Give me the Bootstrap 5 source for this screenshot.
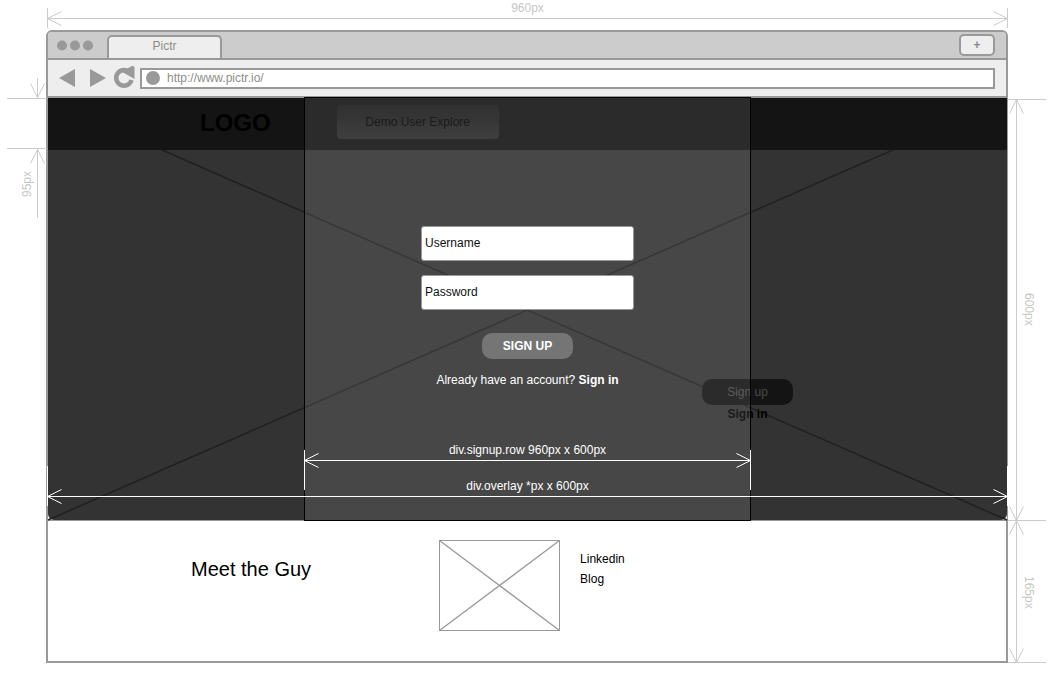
<!DOCTYPE html>
<html lang="en">
<head>
<meta charset="utf-8">
<meta name="viewport" content="width=device-width, initial-scale=1">
<title>Pictr wireframe</title>
<link href="https://cdn.jsdelivr.net/npm/bootstrap@5.3.0/dist/css/bootstrap.min.css" rel="stylesheet">
<style>
  body { font: 12px/18px "Liberation Sans", Arial, sans-serif; color: #000; background: #fff; }
  a { color: inherit; text-decoration: none; }
  input, button { font: inherit; }
  svg { display: block; overflow: visible; }

  /* Sheet: gutter for dimensions | browser | gutter for dimensions */
  .sheet { display: grid; grid-template-columns: 46px minmax(0, 1fr) 44px; }
  .west { grid-column: 1; }
  .mid { grid-column: 2; }
  .east { grid-column: 3; }
  .dim { stroke: #ccc; fill: none; }
  .dim-label { color: #c4c8c2; }
  .vert { writing-mode: vertical-rl; }
  .flip { transform: rotate(180deg); }
  .top-dim { height: 30px; margin-left: 1px; }
  .top-dim .dim-label { top: -1px; }
  .top-dim svg { top: 8px; }
  .bar-height { padding: 73px 0 0 18px; }

  /* Browser chrome */
  .chrome { border: 2px solid #999; border-radius: 6px 6px 0 0; background: #eee; overflow: hidden; }
  .tabs { height: 28px; background: #ccc; border-bottom: 2px solid #999; padding: 0 11px 0 9px; }
  .tab { width: 115px; height: 23px; border: 2px solid #999; border-bottom: 0; border-radius: 5px 5px 0 0; background: #eee; color: #8c8f88; line-height: 18px; margin-left: 13px; }
  .new-tab { width: 36px; height: 22px; border: 2px solid #999; border-radius: 5px; background: #eee; color: #888; padding: 0; line-height: 16px; }
  .tools { height: 36px; padding: 0 11px 0 10px; }
  .address { height: 21px; border: 2px solid #999; background: #fff; padding-left: 4px; }
  .address input { border: 0; outline: 0; color: #8c8f88; background: none; padding: 0; line-height: 16px; }

  /* Hero with stacked layers */
  .hero { border-left: 2px solid #999; border-right: 1px solid #999; border-bottom: 1px solid #999; }
  .stage { display: grid; background: #333; border-radius: 0 0 6px 6px; }
  .stage > * { grid-area: 1 / 1; }
  .cross { padding-top: 2px; }
  .cross svg { width: 100%; height: 100%; stroke: #202020; stroke-width: 1.5; }
  .topbar { height: 52px; background: #141414; padding-left: 152px; gap: 66px; }
  .brand { font-size: 24px; line-height: 28px; font-weight: 700; padding-bottom: 2px; }
  .demo { width: 162px; height: 34px; border: 0; border-radius: 4px; background: linear-gradient(#191919, #2a2a2a); color: #000; margin-top: -4px; }
  .pill { width: 91px; height: 26px; border: 0; border-radius: 10px; padding: 0; }
  .ghost { padding: 229px 214px 0 0; }
  .ghost .pill { background: #141414; color: #4a4a4a; }
  .panel { width: 447px; max-width: 100%; margin: -1px auto; border: 1px solid #000; background: rgba(255, 255, 255, .1); padding: 128px 0 131px; color: #fff; }
  .field { width: 213px; height: 35px; border: 1px solid #999; border-radius: 3px; background: #fff; padding: 0 3px 1px; color: #000; outline: 0; }
  .field::placeholder { color: #111; opacity: 1; }
  .panel .pill { background: #757575; color: #fff; font-weight: 700; margin: 9px 0 -2px; }
  .panel .form-rows { gap: 14px; }

  /* White dimensions drawn over the hero */
  .measure { color: #fff; }
  .measure .dim { stroke: #fff; }
  .m-row { bottom: 30px; left: 0; right: 0; width: 447px; max-width: 100%; margin: auto; }
  .m-row .name { top: -9px; }
  .m-overlay { bottom: 14px; left: -1px; right: -1px; }
  .m-overlay .name { top: 11px; }

  /* Footer */
  .foot { border: 2px solid #999; border-top: 0; padding: 19px 0 30px 143px; gap: 128px; }
  .foot h2 { font-size: 20px; line-height: 24px; margin: 17px 0 0; }
  .thumb { width: 121px; height: 91px; }
  .foot ul { line-height: 20px; margin: 9px 0 0 20px; }
</style>
</head>
<body>
<svg width="0" height="0" class="position-absolute" aria-hidden="true">
  <defs>
    <path id="west-head" d="M14.5-7 .5 0l14 7"/>
    <path id="east-head" d="M-14.5-7-.5 0l-14 7"/>
    <path id="north-head" d="M-7 14.5 0 .5l7 14"/>
    <path id="south-head" d="M-7-14.5 0-.5l7-14"/>
  </defs>
</svg>

<main class="sheet">
  <div class="mid top-dim position-relative">
    <svg class="dim position-absolute" width="100%" height="20">
      <line x1="0" y1="10.5" x2="100%" y2="10.5"/>
      <line x1=".5" y1="0" x2=".5" y2="20"/>
      <line x1="100%" y1="0" x2="100%" y2="20" transform="translate(-.5)"/>
      <use href="#west-head" y="10.5"/><use href="#east-head" x="100%" y="10.5"/>
    </svg>
    <div class="dim-label position-absolute w-100 text-center">960px</div>
  </div>

  <header class="mid chrome">
    <div class="tabs d-flex align-items-end">
      <svg class="align-self-center" width="37" height="11" fill="#999"><circle cx="5" cy="5.5" r="5"/><circle cx="18" cy="5.5" r="5"/><circle cx="31" cy="5.5" r="5"/></svg>
      <div class="tab text-center">Pictr</div>
      <button class="new-tab ms-auto align-self-center fw-bold" type="button">+</button>
    </div>
    <div class="tools d-flex align-items-center">
      <svg width="82" height="24" fill="#999" class="flex-shrink-0">
        <path d="M1 12 17 3v18zM32 3l16 9-16 9z"/>
        <path d="M73.500 14a7.800 7.800 0 1 1-3-8.500" fill="none" stroke="#999" stroke-width="4.500"/>
        <path d="M63.500 5.500 74 0q2.500-.5 2.500 2v11z"/>
      </svg>
      <div class="address d-flex align-items-center flex-fill">
        <svg width="21" height="16" fill="#999" class="flex-shrink-0"><circle cx="7" cy="8" r="7"/></svg>
        <input class="flex-fill" type="text" aria-label="Address" value="http://www.pictr.io/">
      </div>
    </div>
  </header>

  <div class="west bar-height position-relative">
    <svg class="dim position-absolute top-0 start-0" width="46" height="124">
      <path d="M7 .5h40M7 50.500h40M37.500-20V0M37.500 51v69"/>
      <use href="#south-head" x="37.500" y="0"/><use href="#north-head" x="37.500" y="51"/>
    </svg>
    <div class="dim-label vert flip">95px</div>
  </div>

  <section class="mid hero">
    <div class="stage position-relative">
      <div class="cross position-absolute w-100 h-100">
        <svg><line x1="0" y1="0" x2="100%" y2="100%"/><line x1="0" y1="100%" x2="100%" y2="0"/></svg>
      </div>
      <div class="position-relative">
        <nav class="topbar d-flex align-items-center">
          <a class="brand" href="#">LOGO</a>
          <button class="demo" type="button">Demo User Explore</button>
        </nav>
        <div class="ghost d-flex justify-content-end">
          <div class="d-flex flex-column align-items-center">
            <button class="pill" type="button">Sign up</button>
            <a class="fw-bold" href="#">Sign in</a>
          </div>
        </div>
      </div>
      <form class="panel position-relative">
        <div class="form-rows d-flex flex-column align-items-center">
          <input class="field" type="text" placeholder="Username" aria-label="Username">
          <input class="field" type="password" placeholder="Password" aria-label="Password">
          <button class="pill" type="button">SIGN UP</button>
          <div>Already have an account? <a class="fw-bold" href="#">Sign in</a></div>
        </div>
      </form>
      <div class="measure m-row position-absolute">
        <svg class="dim" width="100%" height="40">
          <line x1="0" y1="10.5" x2="100%" y2="10.5"/>
          <line x1=".5" y1="0" x2=".5" y2="40"/>
          <line x1="100%" y1="0" x2="100%" y2="40" transform="translate(-.5)"/>
          <use href="#west-head" y="10.5"/><use href="#east-head" x="100%" y="10.5"/>
        </svg>
        <div class="name position-absolute w-100 text-center">div.signup.row 960px x 600px</div>
      </div>
      <div class="measure m-overlay position-absolute">
        <svg class="dim" width="100%" height="40">
          <line x1="0" y1="30.5" x2="100%" y2="30.5"/>
          <line x1=".5" y1="0" x2=".5" y2="40"/>
          <line x1="100%" y1="0" x2="100%" y2="40" transform="translate(-.5)"/>
          <use href="#west-head" y="30.5"/><use href="#east-head" x="100%" y="30.5"/>
        </svg>
        <div class="name position-absolute w-100 text-center">div.overlay *px x 600px</div>
      </div>
    </div>
  </section>

  <div class="east d-flex align-items-center position-relative">
    <svg class="dim position-absolute h-100 w-100 top-0">
      <path d="M0 1.500h38"/>
      <line x1="8.500" y1="1" x2="8.500" y2="100%"/>
      <use href="#north-head" x="8.500" y="1"/><use href="#south-head" x="8.500" y="100%"/>
    </svg>
    <div class="dim-label vert ms-2 ps-1">600px</div>
  </div>

  <footer class="mid foot d-flex align-items-start">
    <h2>Meet the Guy</h2>
    <div class="d-flex">
      <svg class="thumb" fill="none" stroke="#999">
        <rect x=".5" y=".5" width="120" height="90"/><path d="M.5.5l120 90M.5 90.500l120-90" stroke-width="1.250"/>
      </svg>
      <ul class="list-unstyled">
        <li><a href="#">Linkedin</a></li>
        <li><a href="#">Blog</a></li>
      </ul>
    </div>
  </footer>

  <div class="east d-flex align-items-center position-relative">
    <svg class="dim position-absolute h-100 w-100 top-0">
      <path d="M0-.5h38"/>
      <line x1="8.500" y1="0" x2="8.500" y2="100%"/>
      <line x1="0" x2="38" y1="100%" y2="100%" transform="translate(0 -.5)"/>
      <use href="#north-head" x="8.500" y="-1"/><use href="#south-head" x="8.500" y="100%"/>
    </svg>
    <div class="dim-label vert ms-2 ps-1">165px</div>
  </div>
</main>
<script src="https://cdn.jsdelivr.net/npm/bootstrap@5.3.0/dist/js/bootstrap.bundle.min.js"></script>
</body>
</html>
